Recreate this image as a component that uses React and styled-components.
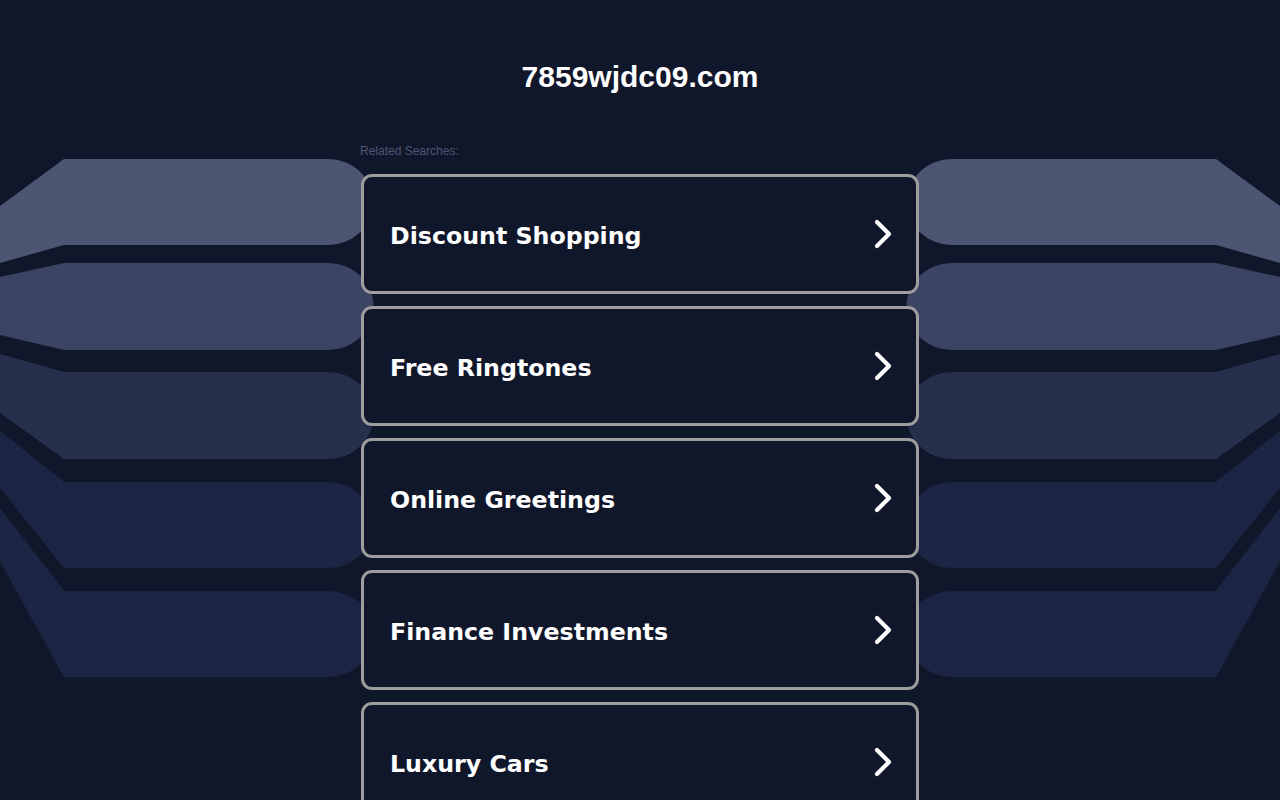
import React from 'react'
import styled, { createGlobalStyle } from 'styled-components'

const GlobalStyle = createGlobalStyle`
  html, body {
    margin: 0;
    padding: 0;
    background: #11172b;
  }
  body {
    font-family: "Liberation Sans", Arial, sans-serif;
    overflow: hidden;
  }
`

const searches = [
  'Discount Shopping',
  'Free Ringtones',
  'Online Greetings',
  'Finance Investments',
  'Luxury Cars',
]

// decorative side bands, left side; right side is mirrored
const bands = [
  { fill: '#4c5673', top: [206, 159], bottom: [263, 245] },
  { fill: '#3b4462', top: [277, 263], bottom: [335, 350] },
  { fill: '#262f4c', top: [354, 372], bottom: [413, 459] },
  { fill: 'url(#dots)', top: [431, 482], bottom: [488, 568] },
  { fill: 'url(#dots)', top: [508, 591], bottom: [561, 677] },
]

function bandPath({ top, bottom }) {
  const r = (bottom[1] - top[1]) / 2
  return `M0,${top[0]} L64,${top[1]} H328 A${r + 2},${r} 0 0 1 328,${bottom[1]} H64 L0,${bottom[0]} Z`
}

function Backdrop() {
  return (
    <BackdropSvg width="1280" height="800" viewBox="0 0 1280 800">
      <defs>
        <pattern id="dots" width="3" height="3" patternUnits="userSpaceOnUse">
          <rect width="3" height="3" fill="#1b2443" />
          <rect x="1" y="1" width="1" height="1" fill="#1f2949" />
        </pattern>
      </defs>
      <g>
        {bands.map((b, i) => <path key={i} d={bandPath(b)} fill={b.fill} />)}
      </g>
      <g transform="translate(1280,0) scale(-1,1)">
        {bands.map((b, i) => <path key={i} d={bandPath(b)} fill={b.fill} />)}
      </g>
    </BackdropSvg>
  )
}

function Chevron() {
  return (
    <ChevronSvg width="20" height="30" viewBox="0 0 20 30">
      <polyline points="4,3 16,15 4,27" fill="none" stroke="#fff" strokeWidth="4.2"
        strokeLinecap="round" strokeLinejoin="round" />
    </ChevronSvg>
  )
}

export default function App() {
  return (
    <Page>
      <GlobalStyle />
      <Backdrop />
      <Content>
        <Title>7859wjdc09.com</Title>
        <Related>Related Searches:</Related>
        <List>
          {searches.map(s => (
            <SearchCard key={s} href="#">
              <span>{s}</span>
              <Chevron />
            </SearchCard>
          ))}
        </List>
      </Content>
    </Page>
  )
}

const Page = styled.div`
  position: relative;
  width: 1280px;
  height: 800px;
  overflow: hidden;
  background: #11172b;
`

const BackdropSvg = styled.svg`
  position: absolute;
  left: 0;
  top: 0;
  z-index: 0;
`

const Content = styled.div`
  position: relative;
  z-index: 1;
  width: 558px;
  margin: 0 auto;
  padding-top: 60px;
`

const Title = styled.h1`
  margin: 0;
  font-family: "Liberation Sans", Arial, sans-serif;
  font-size: 30px;
  line-height: 34px;
  font-weight: 700;
  color: #fff;
  text-align: center;
`

const Related = styled.div`
  margin: 50px 0 16px -1px;
  font-size: 12px;
  line-height: 14px;
  color: #4b5672;
`

const List = styled.div`
  display: flex;
  flex-direction: column;
  gap: 12px;
`

const SearchCard = styled.a`
  box-sizing: border-box;
  height: 120px;
  display: flex;
  align-items: center;
  justify-content: space-between;
  padding: 3px 23px 0 26px;
  border: 3px solid #9e9e9e;
  border-radius: 11px;
  background: #11172b;
  text-decoration: none;
  color: #fff;
  font-family: "DejaVu Sans", Verdana, sans-serif;
  font-weight: 700;
  font-size: 23.7px;

  svg {
    margin-top: -3px;
  }
`

const ChevronSvg = styled.svg`
  display: block;
  flex: none;
`
